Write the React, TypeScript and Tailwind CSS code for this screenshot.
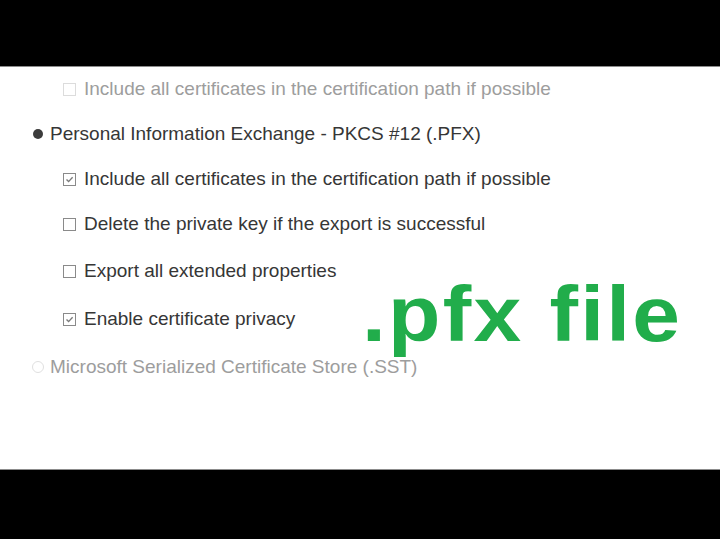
import React from "react";

type Row = {
  kind: "check" | "radio";
  label: string;
  checked?: boolean;
  disabled?: boolean;
  h: string;
};

const rows: Row[] = [
  { kind: "check", label: "Include all certificates in the certification path if possible", disabled: true, h: "h-[44px]" },
  { kind: "radio", label: "Personal Information Exchange - PKCS #12 (.PFX)", checked: true, h: "h-[46px]" },
  { kind: "check", label: "Include all certificates in the certification path if possible", checked: true, h: "h-[44px]" },
  { kind: "check", label: "Delete the private key if the export is successful", h: "h-[46px]" },
  { kind: "check", label: "Export all extended properties", h: "h-[48px]" },
  { kind: "check", label: "Enable certificate privacy", checked: true, h: "h-[48px]" },
  { kind: "radio", label: "Microsoft Serialized Certificate Store (.SST)", disabled: true, h: "h-[48px]" },
];

function Box({ checked, disabled }: { checked?: boolean; disabled?: boolean }) {
  return (
    <span
      className={`mr-[8px] flex h-[13px] w-[13px] items-center justify-center border ${
        disabled ? "border-[#dcdcdc]" : "border-[#8a8a8a]"
      } bg-white`}
    >
      {checked && (
        <svg width="9" height="9" viewBox="0 0 9 9">
          <path d="M1.5 4.5 L3.6 6.6 L7.6 2.2" fill="none" stroke="#7a7a7a" strokeWidth="1.4" />
        </svg>
      )}
    </span>
  );
}

function Radio({ checked, disabled }: { checked?: boolean; disabled?: boolean }) {
  return (
    <span className="mr-[6px] flex h-[12px] w-[12px] items-center justify-center">
      <span
        className={`rounded-full ${
          checked ? "h-[10px] w-[10px] bg-[#3c3c3c]" : disabled ? "h-[12px] w-[12px] border border-[#e0e0e0]" : "h-[12px] w-[12px] border border-[#8a8a8a]"
        }`}
      />
    </span>
  );
}

export default function App() {
  return (
    <div className="flex h-[539px] w-[720px] flex-col bg-black" style={{ fontFamily: "'Liberation Sans', Arial, sans-serif" }}>
      <div className="h-[67px] shrink-0 border-b border-[#8c8c8c] bg-black" />
      <div className="relative flex flex-1 flex-col bg-white">
        {rows.map((r, i) => (
          <div
            key={i}
            className={`flex ${r.h} items-center ${r.kind === "radio" ? "pl-[32px]" : "pl-[63px]"} text-[19px] ${
              r.disabled ? "text-[#9d9d9d]" : "text-[#363636]"
            }`}
          >
            {r.kind === "radio" ? (
              <Radio checked={r.checked} disabled={r.disabled} />
            ) : (
              <Box checked={r.checked} disabled={r.disabled} />
            )}
            <span>{r.label}</span>
          </div>
        ))}
        <div className="absolute left-[362px] top-[208px] origin-left scale-x-[1.1] text-[78px] font-bold leading-none tracking-[2px] text-[#21ad4b]">
          .pfx file
        </div>
      </div>
      <div className="h-[70px] shrink-0 border-t border-[#8c8c8c] bg-black" />
    </div>
  );
}
